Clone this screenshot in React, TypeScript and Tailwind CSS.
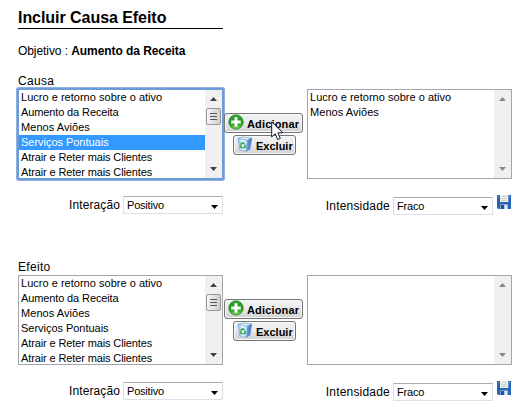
import React from "react";

const OBJECTIVES = [
  { text: "Lucro e retorno sobre o ativo", spacing: "tracking-[0.02px]" },
  { text: "Aumento da Receita", spacing: "tracking-[-0.12px]" },
  { text: "Menos Aviões", spacing: "tracking-[0.05px]" },
  { text: "Serviços Pontuais", spacing: "tracking-[-0.03px]" },
  { text: "Atrair e Reter mais Clientes", spacing: "tracking-[-0.12px]" },
  { text: "Atrair e Reter mais Clientes", spacing: "tracking-[-0.12px]" },
];

function ScrollBar({ active }: { active: boolean }) {
  const color = active ? "#404040" : "#8b8b8b";
  return (
    <div className="flex w-[17px] shrink-0 flex-col items-center bg-[#f0f0f0]">
      <svg className="mt-[7px] shrink-0" width="7" height="4" viewBox="0 0 7 4">
        <path d="M3.5 0 7 4H0Z" fill={color} />
      </svg>
      {active && (
        <div className="mt-[7px] flex h-[17px] w-[15px] flex-col items-center justify-center gap-[2px] rounded-[2px] border border-[#979797] bg-linear-to-r from-[#f6f6f6] to-[#cfcfd0]">
          <div className="h-px w-[7px] bg-[#555]" />
          <div className="h-px w-[7px] bg-[#555]" />
          <div className="h-px w-[7px] bg-[#555]" />
        </div>
      )}
      <svg className="mt-auto mb-[7px] shrink-0" width="7" height="4" viewBox="0 0 7 4">
        <path d="M0 0H7L3.5 4Z" fill={color} />
      </svg>
    </div>
  );
}

function ListBox({ items, selected, focused = false }: { items: typeof OBJECTIVES; selected?: number; focused?: boolean }) {
  return (
    <div
      className={
        focused
          ? "flex h-[90px] w-[205px] overflow-hidden rounded-[1px] border border-[#6c9bd6] bg-white shadow-[0_0_0_1px_#6c9bd6,0_0_0_2px_#8db2e0]"
          : "flex h-[90px] w-[205px] overflow-hidden border border-[#a5a5a9] bg-white"
      }
    >
      <div className="min-w-0 flex-1">
        {items.map((item, i) => (
          <div
            key={i}
            className={`h-[15px] pl-[2px] text-[11px] leading-[15px] whitespace-nowrap ${item.spacing} ${i === selected ? "bg-[#3399ff] text-white" : ""}`}
          >
            {item.text}
          </div>
        ))}
      </div>
      <ScrollBar active={items.length > 5} />
    </div>
  );
}

function PlusIcon() {
  return (
    <svg width="16" height="16" viewBox="0 0 16 16">
      <defs>
        <linearGradient id="plus" x1="0" y1="0" x2="0" y2="1">
          <stop offset="0" stopColor="#3aa63c" />
          <stop offset="0.5" stopColor="#159414" />
          <stop offset="1" stopColor="#77d34f" />
        </linearGradient>
      </defs>
      <circle cx="8" cy="8" r="7.2" fill="url(#plus)" stroke="#238a24" strokeWidth="0.8" />
      <path d="M6.5 3.2h3v3.3h3.3v3H9.5v3.3h-3V9.5H3.2v-3h3.3z" fill="#fff" />
    </svg>
  );
}

function BinIcon() {
  return (
    <svg width="16" height="16" viewBox="0 0 16 16">
      <defs>
        <linearGradient id="bin" x1="0" y1="0" x2="1" y2="0">
          <stop offset="0" stopColor="#86b9ec" />
          <stop offset="0.3" stopColor="#e6f5ff" />
          <stop offset="0.65" stopColor="#b4d8f5" />
          <stop offset="1" stopColor="#3467bb" />
        </linearGradient>
      </defs>
      <path d="M1 2.4 2.6 13.8 9 15.4 12.9 13.2 14.8 2.2z" fill="url(#bin)" stroke="#6b9bd3" strokeWidth="0.6" />
      <path d="M1 2.4 6 1l8.8 1.1-4.4 1.9z" fill="#edf7fd" stroke="#719dce" strokeWidth="0.7" />
      <path d="M10.4 4 14.8 2.1 12.9 13.2 9 15.4z" fill="#4379c9" opacity="0.65" />
      <path d="M3.7 8.8 5.2 6.9l2.3.8M8 8.8l.1 2.3-1.8 1M5.4 12l-1.5-.9-.1-1.7" fill="none" stroke="#27a52b" strokeWidth="1.5" />
    </svg>
  );
}

function DiskIcon() {
  return (
    <svg width="14" height="14" viewBox="0 0 14 14">
      <path d="M0 0h14v14H1.3L0 12.7z" fill="#2765b5" />
      <path d="M3 0h8.3v7H3z" fill="#eef0eb" />
      <path d="M4 1.7h6M4 3.7h6M4 5.5h6" stroke="#c6cbc5" strokeWidth="0.8" />
      <path d="M3.5 9.5h7.2V14H3.5z" fill="#dce7ef" />
      <path d="M4 10h3.2v4H4z" fill="#205299" />
      <path d="M12 1h1v1h-1zM1 1h1v1H1z" fill="#7aadde" />
    </svg>
  );
}

function PushButton({ icon, label, size }: { icon: React.ReactNode; label: string; size: string }) {
  return (
    <button
      className={`flex h-5 items-start rounded-[3px] border border-[#747474] bg-linear-to-b from-[#f3f3f3] via-[#e9e9e9] to-[#d0d0d0] pl-[3px] text-[11px] leading-[18px] font-bold shadow-[inset_0_0_0_1px_#f8f8f8] ${size}`}
    >
      {icon}
      <span className="mt-px ml-[3px]">{label}</span>
    </button>
  );
}

function Dropdown({ value }: { value: string }) {
  return (
    <div className="flex h-[18px] w-[100px] items-center justify-between rounded-[1px] border border-[#dcdfe4] border-t-[#a9acb2] bg-white pr-[4px] pl-[3px] text-[11px] leading-4 tracking-[-0.2px]">
      <span>{value}</span>
      <svg className="mt-[3px]" width="7" height="4" viewBox="0 0 7 4">
        <path d="M0 0H7L3.5 4Z" fill="#000" />
      </svg>
    </div>
  );
}

function Cursor() {
  return (
    <svg className="absolute top-[32px] left-[48px]" width="13" height="20" viewBox="0 0 13 20">
      <path d="M.7.9V16L4.3 12.7 6.7 18.5 9.3 17.4 6.9 11.8H11.8Z" fill="#fff" stroke="#171b2b" strokeWidth="1" />
    </svg>
  );
}

function Section({ title, source, chosen, pointer = false }: { title: string; source: React.ReactNode; chosen: typeof OBJECTIVES; pointer?: boolean }) {
  return (
    <section className="h-[186px] w-[500px]">
      <h2 className="h-[15px] text-[12px] leading-[15px] tracking-[0.3px]">{title}</h2>
      <div className="flex">
        {source}
        <div className="relative flex w-[84px] flex-col gap-[2px] pt-6 pl-px">
          <PushButton icon={<PlusIcon />} label="Adicionar" size="w-[79px] tracking-[0.15px]" />
          <PushButton icon={<BinIcon />} label="Excluir" size="ml-[9px] w-[63px]" />
          {pointer && <Cursor />}
        </div>
        <ListBox items={chosen} />
      </div>
      <div className="flex pt-4">
        <div className="flex w-[205px] items-center justify-end gap-[3px]">
          <span className="text-[12px] leading-[18px] tracking-[0.1px]">Interação</span>
          <Dropdown value="Positivo" />
        </div>
        <div className="flex w-[288px] items-start justify-end">
          <span className="mt-[2px] mr-[3px] text-[12px] leading-[18px] tracking-[0.2px]">Intensidade</span>
          <div className="mt-[2px] mr-[4px]">
            <Dropdown value="Fraco" />
          </div>
          <DiskIcon />
        </div>
      </div>
    </section>
  );
}

export default function App() {
  return (
    <main className="h-[420px] w-[530px] overflow-hidden bg-white pl-[18px] font-['Liberation_Sans',Arial,sans-serif] text-black">
      <h1 className="mt-[7px] h-[22px] w-[205px] border-b border-black text-[16px] leading-[21px] font-bold tracking-[-0.05px] whitespace-nowrap">
        Incluir Causa Efeito
      </h1>
      <p className="mt-[15px] mb-[15px] h-[15px] text-[12px] leading-[15px] tracking-[-0.07px]">
        Objetivo : <b>Aumento da Receita</b>
      </p>
      <Section
        title="Causa"
        source={<ListBox items={OBJECTIVES} selected={3} focused />}
        chosen={[OBJECTIVES[0], OBJECTIVES[2]]}
        pointer
      />
      <Section title="Efeito" source={<ListBox items={OBJECTIVES} />} chosen={[]} />
    </main>
  );
}
